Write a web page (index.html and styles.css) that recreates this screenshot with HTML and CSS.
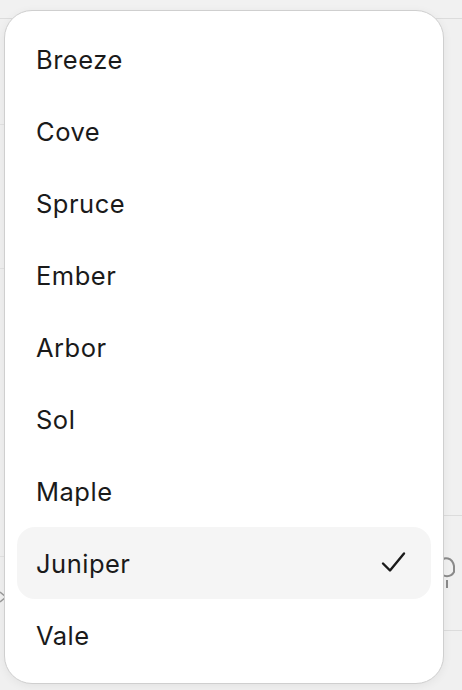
FILE: index.html
```html
<!DOCTYPE html>
<html>
<head>
<meta charset="utf-8">
<link rel="stylesheet" href="styles.css">
</head>
<body>
<div class="page">
  <div class="bg-top"></div>
  <div class="bg-row r1"></div>
  <div class="bg-row r2"></div>
  <div class="bg-row r3"></div>
  <div class="bg-right-line l1"></div>
  <div class="bg-right-line l2"></div>
  <svg class="bg-icon" width="24" height="40" viewBox="0 0 24 40"><path d="M4 6 a8 10 0 0 1 14 4 v6 a8 8 0 0 1 -14 0" fill="none" stroke="#8a8a8a" stroke-width="2"/><path d="M11 24 v8" stroke="#8a8a8a" stroke-width="2"/></svg>
  <svg class="bg-icon-left" width="10" height="20" viewBox="0 0 10 20"><path d="M0 4 L6 9 L0 14" fill="none" stroke="#9a9a9a" stroke-width="1.5"/></svg>

  <div class="menu">
    <div class="item">Breeze</div>
    <div class="item">Cove</div>
    <div class="item">Spruce</div>
    <div class="item">Ember</div>
    <div class="item">Arbor</div>
    <div class="item">Sol</div>
    <div class="item">Maple</div>
    <div class="item selected">Juniper
      <svg class="check" width="26" height="24" viewBox="0 0 26 24"><path d="M2 12.5 L9 19.5 L23 2.5" fill="none" stroke="#1a1a1a" stroke-width="2.4" stroke-linecap="round" stroke-linejoin="round"/></svg>
    </div>
    <div class="item">Vale</div>
  </div>
</div>
</body>
</html>
```
FILE: styles.css
```css
html, body {
  margin: 0;
  padding: 0;
}
body {
  width: 462px;
  height: 690px;
  overflow: hidden;
  background: #f0f0f0;
  font-family: Inter, "Noto Sans", "Liberation Sans", sans-serif;
}
.page {
  position: relative;
  width: 462px;
  height: 690px;
  background: #f0f0f0;
}
.bg-top {
  height: 18px;
  background: #f1f1f1;
  border-bottom: 1px solid #dcdcdc;
}
.bg-row {
  position: absolute;
  left: 0;
  width: 20px;
  height: 1px;
  background: #e2e2e2;
}
.r1 { top: 124px; }
.r2 { top: 268px; }
.r3 { top: 556px; }
.bg-right-line {
  position: absolute;
  right: 0;
  width: 30px;
  height: 1px;
  background: #dcdcdc;
}
.l1 { top: 515px; }
.l2 { top: 630px; }
.bg-icon {
  position: absolute;
  left: 436px;
  top: 556px;
}
.bg-icon-left {
  position: absolute;
  left: 0;
  top: 588px;
}
.menu {
  position: absolute;
  left: 4px;
  top: 10px;
  width: 414px;
  padding: 12px 12px;
  background: #ffffff;
  border: 1px solid #cfcfcf;
  border-radius: 28px;
  box-shadow: 0 2px 10px rgba(0, 0, 0, 0.06);
  display: flex;
  flex-direction: column;
}
.item {
  height: 72px;
  display: flex;
  align-items: center;
  justify-content: space-between;
  padding: 0 24px 0 19px;
  font-size: 25.5px;
  color: #1a1a1a;
  letter-spacing: 0.5px;
  border-radius: 18px;
}
.item.selected {
  background: #f5f5f5;
}
.check {
  display: block;
}
```
